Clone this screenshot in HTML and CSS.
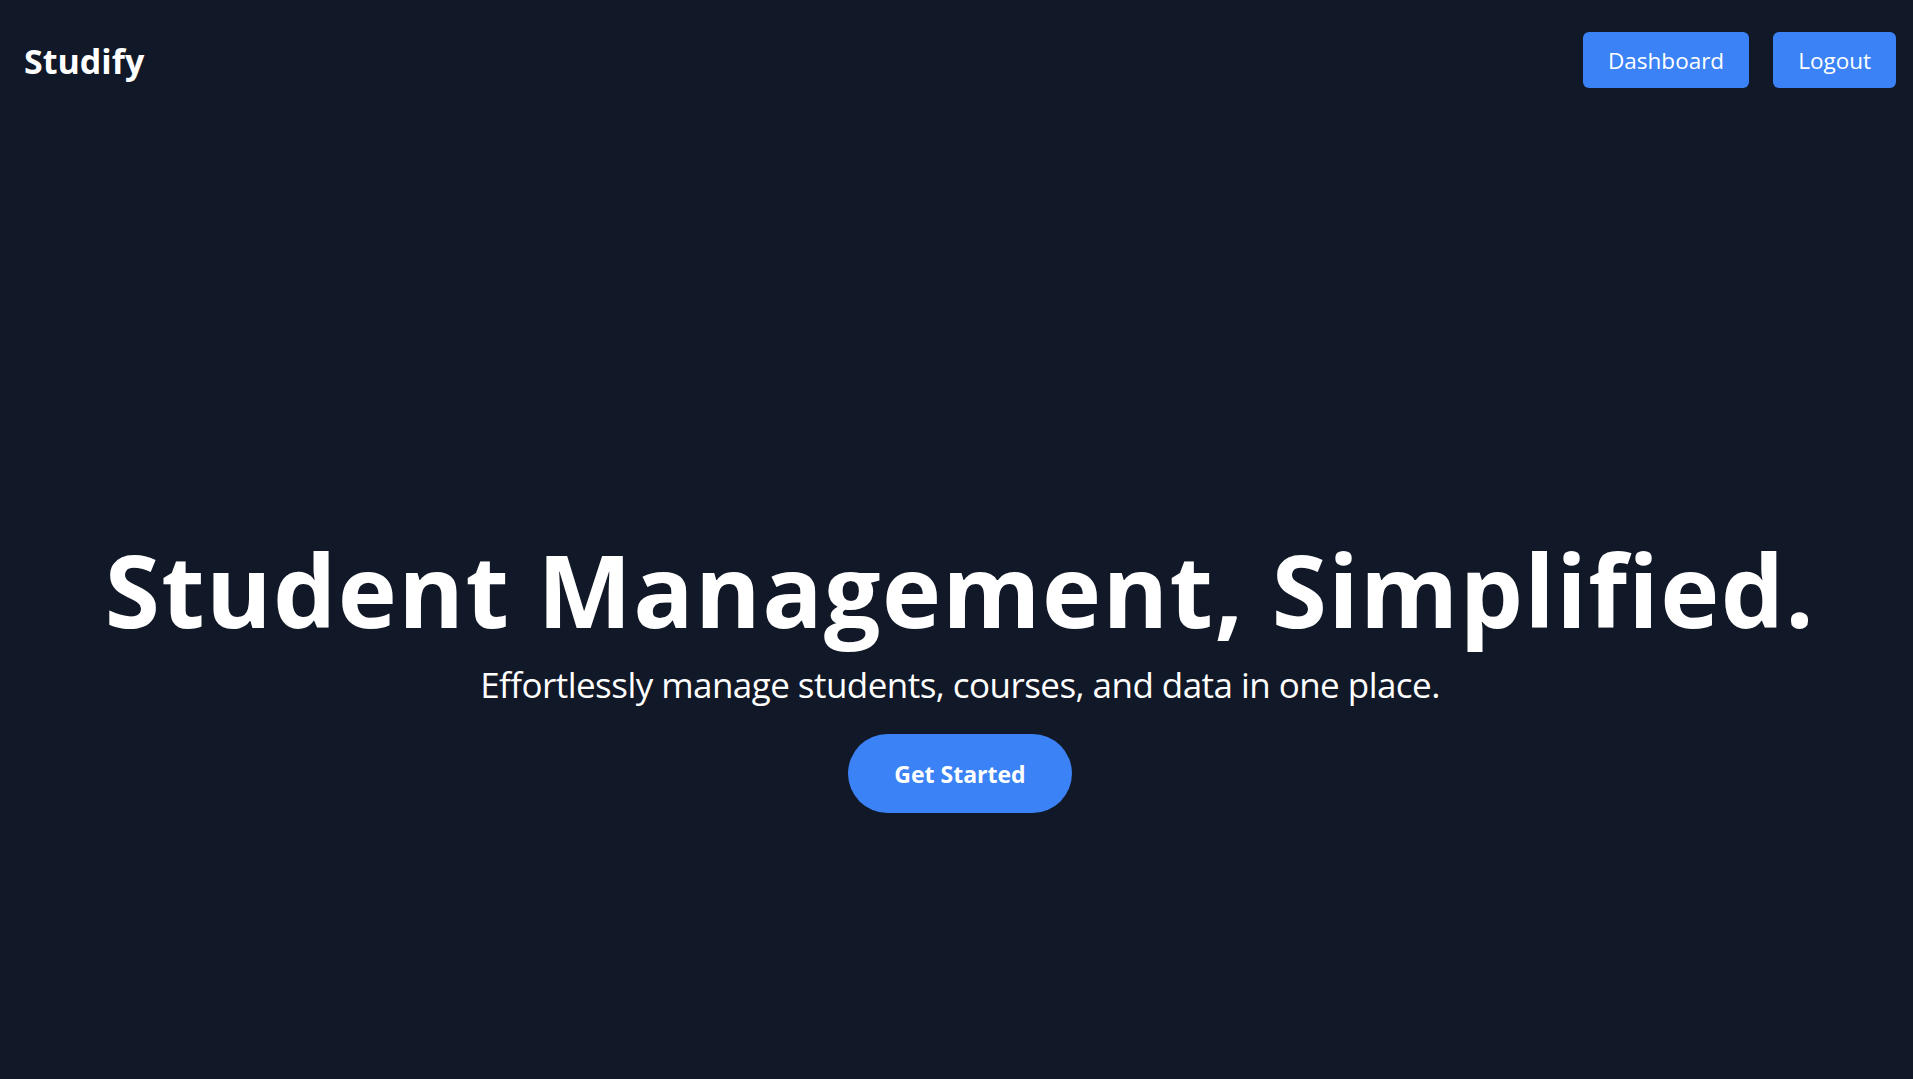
FILE: index.html
```html
<!DOCTYPE html>
<html lang="en">
<head>
<meta charset="utf-8">
<title>Studify</title>
<link rel="stylesheet" href="styles.css">
</head>
<body>
  <header class="nav">
    <div class="logo">Studify</div>
    <div class="nav-actions">
      <a class="nav-btn" href="#">Dashboard</a>
      <a class="nav-btn" href="#">Logout</a>
    </div>
  </header>
  <main class="hero">
    <h1 class="hero-title">Student Management, Simplified.</h1>
    <p class="hero-sub">Effortlessly manage students, courses, and data in one place.</p>
    <a class="cta" href="#">Get Started</a>
  </main>
</body>
</html>
```

FILE: styles.css
```css
* { box-sizing: border-box; }
html, body {
  margin: 0;
  padding: 0;
  background: #111827;
  color: #ffffff;
  font-family: "Open Sans", "Noto Sans", sans-serif;
  height: 100%;
  overflow: hidden;
}
.nav {
  display: flex;
  align-items: center;
  justify-content: space-between;
  padding: 32px 17px 0 24px;
  height: 88px;
}
.logo {
  font-size: 34px;
  font-weight: 700;
  line-height: 1;
  padding-top: 2px;
}
.nav-actions {
  display: flex;
  gap: 24px;
}
.nav-btn {
  display: flex;
  align-items: center;
  justify-content: center;
  height: 56px;
  background: #3b82f6;
  color: #ffffff;
  text-decoration: none;
  font-size: 22.5px;
  border-radius: 6px;
  padding: 0 25px;
}
.hero {
  display: flex;
  flex-direction: column;
  align-items: center;
  padding-top: 451px;
  padding-left: 7px;
}
.hero-title {
  margin: 0;
  font-size: 100px;
  font-weight: 700;
  line-height: 1;
  letter-spacing: 1.4px;
}
.hero-sub {
  margin: 19px 0 0;
  font-size: 35px;
  line-height: 54px;
  letter-spacing: -0.55px;
}
.cta {
  margin-top: 22px;
  display: flex;
  align-items: center;
  justify-content: center;
  width: 224px;
  height: 79px;
  border-radius: 40px;
  background: #3b82f6;
  color: #ffffff;
  text-decoration: none;
  font-size: 23px;
  font-weight: 700;
}
```
